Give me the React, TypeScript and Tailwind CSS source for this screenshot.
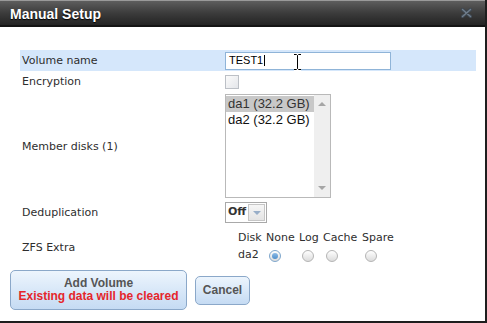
import React from 'react';

const labelCls = "w-[205px] pl-[2px] pt-[2px] text-[11px] text-[#2e2e2e] font-['DejaVu_Sans',sans-serif]";

const Radio: React.FC<{ checked?: boolean }> = ({ checked }) => (
  <span
    className={`ml-[3px] flex h-[12px] w-[12px] items-center justify-center rounded-full border bg-gradient-to-b from-[#ffffff] to-[#dcdcdc] ${
      checked ? 'border-[#7ea6cc]' : 'border-[#b4b4b4]'
    }`}
  >
    {checked && <span className="h-[6px] w-[6px] rounded-full bg-gradient-to-b from-[#8dbbe6] to-[#4f8fcb]" />}
  </span>
);

const App: React.FC = () => {
  return (
    <div className="relative flex h-[323px] w-[487px] flex-col overflow-hidden border-r-2 border-b-2 border-[#1e1e1e] bg-white">
      {/* title bar */}
      <div className="flex h-[27px] shrink-0 items-center justify-between border-t border-[#9a9a9a] border-b-2 border-b-[#141414] bg-gradient-to-b from-[#5e5e5e] via-[#3c3c3c] to-[#242424] pl-[10px] pr-[13px]">
        <span className="mt-[3px] text-[14px] font-bold text-white [text-shadow:0_1px_1px_#000] font-['Liberation_Sans',sans-serif]">
          Manual Setup
        </span>
        <svg width="11" height="10" viewBox="0 0 11 10">
          <path d="M1.5 1.5 L9.5 8.5 M9.5 1.5 L1.5 8.5" stroke="#3e4852" strokeWidth="3.2" strokeLinecap="round" />
          <path d="M1.5 1.5 L9.5 8.5 M9.5 1.5 L1.5 8.5" stroke="#6f7c8a" strokeWidth="1.4" strokeLinecap="round" />
        </svg>
      </div>

      {/* form */}
      <div className="flex flex-col pl-[20px] pt-[23px]">
        <div className="flex h-[21px] w-[456px] items-center bg-[#d5e7fb]">
          <span className={labelCls}>Volume name</span>
          <div className="relative flex h-[18px] w-[166px] items-center border border-[#8fb4d8] bg-white pl-[3px] text-[11px] text-black font-['Liberation_Sans',sans-serif]">
            <span>TEST1</span>
            <span className="ml-[1px] h-[11px] w-[1px] bg-black" />
          </div>
        </div>

        <div className="flex h-[21px] items-center">
          <span className={labelCls}>Encryption</span>
          <span className="h-[14px] w-[14px] border border-[#bcc0c6] bg-gradient-to-br from-[#fbfbfb] to-[#e4e6ea]" />
        </div>

        <div className="mt-[2px] flex items-center">
          <span className={labelCls}>Member disks (1)</span>
          <div className="flex h-[104px] w-[106px] border border-[#b9b9b9] bg-white text-[13px] leading-[16px] font-['Liberation_Sans',sans-serif]">
            <div className="flex flex-1 flex-col pt-[1px]">
              <span className="bg-[#c8c8c8] pl-[2px] text-[#333]">da1 (32.2 GB)</span>
              <span className="pl-[2px] text-[#111]">da2 (32.2 GB)</span>
            </div>
            <div className="flex w-[16px] flex-col items-center justify-between bg-[#efefef] py-[7px]">
              <span className="h-0 w-0 border-x-[4px] border-b-[4px] border-x-transparent border-b-[#a6a6a6]" />
              <span className="h-0 w-0 border-x-[4px] border-t-[4px] border-x-transparent border-t-[#a6a6a6]" />
            </div>
          </div>
        </div>

        <div className="mt-[4px] flex items-center">
          <span className={labelCls}>Deduplication</span>
          <div className="flex h-[21px] w-[42px] items-center justify-between border border-[#a9a9a9] bg-white pl-[2px] pr-[1px]">
            <span className="text-[11px] font-bold text-[#333] font-['DejaVu_Sans',sans-serif]">Off</span>
            <span className="flex h-[17px] w-[17px] items-center justify-center border border-[#c6c6c6] bg-gradient-to-b from-[#f6f6f6] to-[#e4e4e4]">
              <span className="h-0 w-0 border-x-[4px] border-t-[4px] border-x-transparent border-t-[#98aec8]" />
            </span>
          </div>
        </div>

        <div className="mt-[6px] flex items-center">
          <span className={labelCls}>ZFS Extra</span>
          <div className="ml-[13px] flex flex-col text-[11px] text-[#2e2e2e] font-['DejaVu_Sans',sans-serif]">
            <div className="flex h-[17px] items-center pt-[1px]">
              <span className="w-[28px]">Disk</span>
              <span className="w-[33px]">None</span>
              <span className="w-[24px]">Log</span>
              <span className="w-[39px]">Cache</span>
              <span className="w-[33px]">Spare</span>
            </div>
            <div className="flex h-[19px] items-center">
              <span className="w-[28px]">da2</span>
              <span className="w-[33px]"><Radio checked /></span>
              <span className="w-[24px]"><Radio /></span>
              <span className="w-[39px]"><Radio /></span>
              <span className="w-[33px]"><Radio /></span>
            </div>
          </div>
        </div>
      </div>

      {/* buttons */}
      <div className="mt-[5px] flex items-center gap-[8px] pl-[10px] font-['Liberation_Sans',sans-serif] text-[12px] font-bold">
        <button className="flex h-[40px] w-[177px] flex-col items-center justify-center rounded-[5px] border border-[#8ba8c9] bg-gradient-to-b from-[#edf5fd] to-[#c5dbf3] leading-[13px]">
          <span className="text-[#555]">Add Volume</span>
          <span className="text-[#e5262b]">Existing data will be cleared</span>
        </button>
        <button className="h-[29px] w-[55px] rounded-[5px] border border-[#8ba8c9] bg-gradient-to-b from-[#edf5fd] to-[#c5dbf3] text-[#555]">
          Cancel
        </button>
      </div>

      {/* mouse pointer (I-beam) */}
      <svg className="absolute left-[293px] top-[53px]" width="9" height="18" viewBox="0 0 9 18">
        <path d="M1 1.5 H3.5 L4.5 2.5 L5.5 1.5 H8 M4.5 2.5 V15.5 M1 16.5 H3.5 L4.5 15.5 L5.5 16.5 H8" stroke="#fff" strokeWidth="3" fill="none" />
        <path d="M1 1.5 H3.5 L4.5 2.5 L5.5 1.5 H8 M4.5 2.5 V15.5 M1 16.5 H3.5 L4.5 15.5 L5.5 16.5 H8" stroke="#000" strokeWidth="1" fill="none" />
      </svg>
    </div>
  );
};

export default App;
